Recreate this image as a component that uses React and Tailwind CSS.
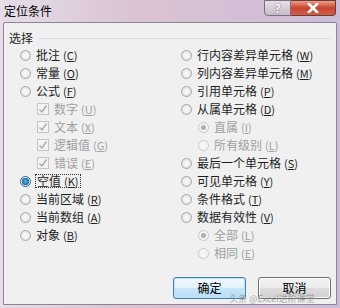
import React from 'react';

const FONT = { fontFamily: '"Noto Sans CJK SC", "Noto Sans", sans-serif' };

// Options in each column; kind: radio | check | sub (indented radio)
const LEFT = [
  { label: '批注', key: 'C' },
  { label: '常量', key: 'O' },
  { label: '公式', key: 'F' },
  { label: '数字', key: 'U', kind: 'check' },
  { label: '文本', key: 'X', kind: 'check' },
  { label: '逻辑值', key: 'G', kind: 'check' },
  { label: '错误', key: 'E', kind: 'check' },
  { label: '空值', key: 'K', selected: true },
  { label: '当前区域', key: 'R' },
  { label: '当前数组', key: 'A' },
  { label: '对象', key: 'B' },
];

const RIGHT = [
  { label: '行内容差异单元格', key: 'W' },
  { label: '列内容差异单元格', key: 'M' },
  { label: '引用单元格', key: 'P' },
  { label: '从属单元格', key: 'D' },
  { label: '直属', key: 'I', kind: 'sub', dot: true },
  { label: '所有级别', key: 'L', kind: 'sub' },
  { label: '最后一个单元格', key: 'S' },
  { label: '可见单元格', key: 'Y' },
  { label: '条件格式', key: 'T' },
  { label: '数据有效性', key: 'V' },
  { label: '全部', key: 'L', kind: 'sub', dot: true },
  { label: '相同', key: 'E', kind: 'sub' },
];

function Radio({ selected, disabled, dot }) {
  if (selected) {
    return (
      <span className="w-[11px] h-[11px] rounded-full border border-[#2c628b] bg-[radial-gradient(circle,#5fb4e0_0%,#1f6c9c_55%,#e8f2f8_60%)] shrink-0" />
    );
  }
  return (
    <span
      className={`w-[11px] h-[11px] rounded-full border shrink-0 flex items-center justify-center ${
        disabled ? 'border-[#c8c8c8] bg-[#f4f4f4]' : 'border-[#a8a8a8] bg-[radial-gradient(circle,#f6f6f6_30%,#d4d4d4_100%)]'
      }`}
    >
      {dot && <span className="w-[5px] h-[5px] rounded-full bg-[#b0b0b0]" />}
    </span>
  );
}

function Check() {
  return (
    <span className="w-[12px] h-[12px] border border-[#c4c4c4] bg-[#f4f4f4] shrink-0 flex items-center justify-center">
      <svg width="10" height="10" viewBox="0 0 10 10">
        <path d="M1.5 5.5 L4 8 L8.5 1.5" fill="none" stroke="#a8a8a8" strokeWidth="1.4" />
      </svg>
    </span>
  );
}

function Key({ k, dim }) {
  return (
    <span className={`ml-[3px] text-[11px] ${dim ? 'text-[#a0a0a0]' : 'text-[#1e1e1e]'}`}>
      (<span className="underline">{k}</span>)
    </span>
  );
}

function Row({ item, side }) {
  const kind = item.kind || 'radio';
  const dim = kind !== 'radio';
  let pad = side === 'left' ? 'pl-[19px]' : 'pl-[180px]';
  if (kind === 'check') pad = 'pl-[36px]';
  if (kind === 'sub') pad = 'pl-[197px]';
  return (
    <div className={`h-[18px] flex items-center ${pad}`}>
      {kind === 'check' ? <Check /> : <Radio selected={item.selected} disabled={dim} dot={item.dot} />}
      <span
        className={`flex items-center ml-[5px] ${
          item.selected ? 'outline outline-1 outline-dotted outline-[#333] px-[1px]' : ''
        } ${dim ? 'text-[#a0a0a0]' : 'text-[#1e1e1e]'}`}
      >
        {item.label}
        <Key k={item.key} dim={dim} />
      </span>
    </div>
  );
}

export default function App() {
  return (
    <div
      className="w-[340px] h-[308px] relative overflow-hidden bg-[linear-gradient(90deg,#e6dde9_0%,#d9c3d3_40%,#d6c0d4_60%,#cbbdd8_100%)] text-[12px] leading-none"
      style={FONT}
    >
      {/* title bar */}
      <div className="h-[22px] flex items-start">
        <span className="pl-[4px] pt-[5px] text-[12px] text-black">定位条件</span>
        <div className="ml-auto mr-[4px] flex">
          <div className="w-[27px] h-[16px] rounded-bl-[4px] border border-[#7a6f80] bg-[linear-gradient(#e9dfe8,#c9bac8)] flex items-center justify-center text-[11px] font-bold text-white [text-shadow:0_0_2px_#555]">
            ?
          </div>
          <div className="w-[45px] h-[16px] rounded-br-[4px] border border-l-0 border-[#6d3a33] bg-[linear-gradient(#e8a08c,#c8432d_50%,#d0604a)] flex items-center justify-center">
            <svg width="12" height="10" viewBox="0 0 12 10">
              <path d="M2 1 L10 9 M10 1 L2 9" stroke="#fff" strokeWidth="2.6" strokeLinecap="square" />
            </svg>
          </div>
        </div>
      </div>

      {/* client area */}
      <div className="absolute left-[3px] top-[22px] w-[334px] h-[283px] bg-[#f0f0f0] border border-[#8e8494] rounded-t-[2px]">
        <div className="relative">
          <div className="flex items-center h-[14px] mt-[8px] pl-[5px]">
            <span className="text-[#1e1e1e]">选择</span>
            <div className="ml-[6px] flex-1 mr-[5px] h-0 border-t border-[#d5dfe5]" />
          </div>
          <div className="mt-[1px] -ml-[3px] relative">
            <div className="grid grid-cols-1">
              {LEFT.map((it, i) => (
                <Row key={'l' + i} item={it} side="left" />
              ))}
            </div>
            <div className="absolute inset-0">
              {RIGHT.map((it, i) => (
                <Row key={'r' + i} item={it} side="right" />
              ))}
            </div>
          </div>
        </div>

        {/* buttons */}
        <div className="absolute left-[169px] top-[254px] flex gap-[12px]">
          <button className="w-[73px] h-[22px] rounded-[3px] border border-[#3c7fb1] bg-[linear-gradient(#f2f9fd,#e2f1fb_50%,#c9e6f8_52%,#b8ddf5)] shadow-[inset_0_0_0_1px_#bfe4f7] text-[12px] text-black">
            确定
          </button>
          <button className="w-[73px] h-[22px] rounded-[3px] border border-[#707070] bg-[linear-gradient(#f2f2f2,#ebebeb_50%,#dddddd_52%,#cfcfcf)] shadow-[inset_0_0_0_1px_#fcfcfc] text-[12px] text-black">
            取消
          </button>
        </div>
        <div className="absolute left-[225px] top-[271px] text-[9px] leading-none text-[#777] opacity-60 whitespace-nowrap">
          头条 @Excel进阶课堂
        </div>
      </div>
    </div>
  );
}
